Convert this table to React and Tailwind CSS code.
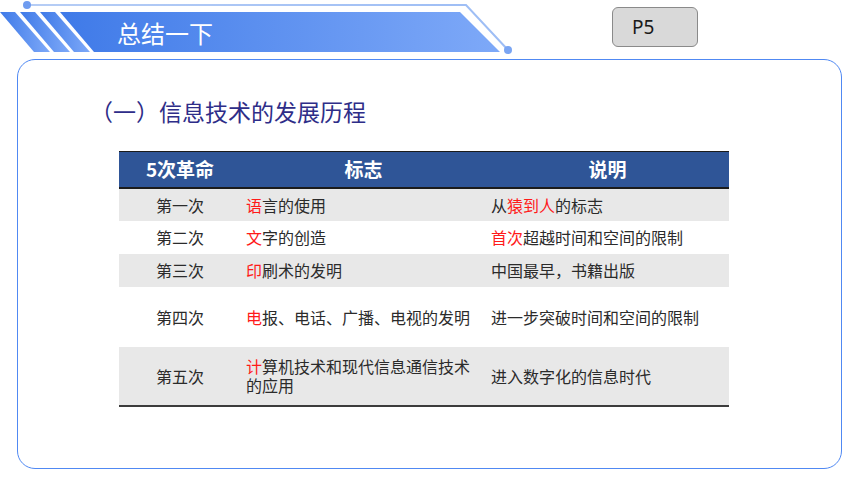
import React from 'react';

const FONT = { fontFamily: '"Noto Sans CJK SC", "Noto Sans", sans-serif' };

const ROWS = [
  { n: '第一次', mark: [['语', true], ['言的使用']], note: [['从'], ['猿到人', true], ['的标志']], h: 'h-[32px]', bg: 'bg-[#e8e8e8]' },
  { n: '第二次', mark: [['文', true], ['字的创造']], note: [['首次', true], ['超越时间和空间的限制']], h: 'h-[33px]', bg: 'bg-white' },
  { n: '第三次', mark: [['印', true], ['刷术的发明']], note: [['中国最早，书籍出版']], h: 'h-[33px]', bg: 'bg-[#e8e8e8]' },
  { n: '第四次', mark: [['电', true], ['报、电话、广播、电视的发明']], note: [['进一步突破时间和空间的限制']], h: 'h-[60px]', bg: 'bg-white' },
  // second line of the mark column breaks the same way the slide does
  { n: '第五次', mark: [['计', true], ['算机技术和现代信息通信技术'], ['\n'], ['的应用']], note: [['进入数字化的信息时代']], h: 'h-[58px]', bg: 'bg-[#e8e8e8]' },
];

function Parts({ parts }) {
  return parts.map(([t, red], i) =>
    t === '\n' ? (
      <br key={i} />
    ) : (
      <span key={i} className={red ? 'text-[#ff1a1a]' : ''}>
        {t}
      </span>
    )
  );
}

function Banner() {
  return (
    <svg className="absolute inset-0" width="520" height="59" viewBox="0 0 520 59">
      <defs>
        <linearGradient id="band" x1="0" y1="0" x2="1" y2="0">
          <stop offset="0" stopColor="#3f7ae8" />
          <stop offset="1" stopColor="#7ea9f8" />
        </linearGradient>
        <linearGradient id="wire" x1="0" y1="0" x2="1" y2="0">
          <stop offset="0" stopColor="#b6cdf5" />
          <stop offset="1" stopColor="#9dbdf5" />
        </linearGradient>
      </defs>
      <polygon points="0,12 15,12 50,52 34,52" fill="url(#band)" />
      <polygon points="20,12 35,12 70,52 54,52" fill="url(#band)" />
      <polygon points="40,12 55,12 90,52 74,52" fill="url(#band)" />
      <polygon points="60,12 460,12 500,52 94,52" fill="url(#band)" />
      <path d="M27 5 H466 L508 50" fill="none" stroke="url(#wire)" strokeWidth="2" />
      <circle cx="27" cy="5" r="4" fill="#6f9cf0" />
      <circle cx="508" cy="50" r="4" fill="#7aa5f3" />
    </svg>
  );
}

export default function App() {
  return (
    <div className="w-[860px] h-[484px] bg-white overflow-hidden" style={FONT}>
      {/* header strip */}
      <div className="flex h-[59px]">
        <div className="relative w-[520px] h-[59px] shrink-0">
          <Banner />
          <div className="relative pl-[117px] pt-[21px] text-[24px] leading-[24px] text-white">总结一下</div>
        </div>
        <div className="ml-[92px] mt-[7px] w-[86px] h-[40px] flex items-center pl-[19px] bg-[#d9d9d9] border border-[#8a8a8a] rounded-[6px] text-[19px] text-[#1a1a1a]" style={{ fontFamily: '"Noto Sans", sans-serif' }}>
          P5
        </div>
      </div>

      {/* main card */}
      <div className="ml-[17px] w-[825px] h-[410px] border-[1.5px] border-[#5089f3] rounded-[18px]">
        <div className="pl-[72px] pt-[40px] text-[23px] leading-[23px] text-[#2e2d88]">（一）信息技术的发展历程</div>

        <div className="ml-[101px] mt-[28px] w-[610px]">
          <div className="grid grid-cols-[122px_245px_243px] h-[38px] bg-[#2f5597] border-t border-b-2 border-[#1b1b1b] text-white font-bold text-[19px] items-center">
            <div className="text-center">5次革命</div>
            <div className="text-center">标志</div>
            <div className="text-center">说明</div>
          </div>
          {ROWS.map((r, i) => (
            <div key={i} className={`grid grid-cols-[122px_245px_243px] items-center text-[16px] leading-[19px] text-[#2b2b2b] ${r.h} ${r.bg}`}>
              <div className="text-center">{r.n}</div>
              <div className="pl-[5px] pr-[4px]">
                <Parts parts={r.mark} />
              </div>
              <div className="pl-[5px]">
                <Parts parts={r.note} />
              </div>
            </div>
          ))}
          <div className="h-[2px] bg-[#3c3c3c]" />
        </div>
      </div>
    </div>
  );
}
